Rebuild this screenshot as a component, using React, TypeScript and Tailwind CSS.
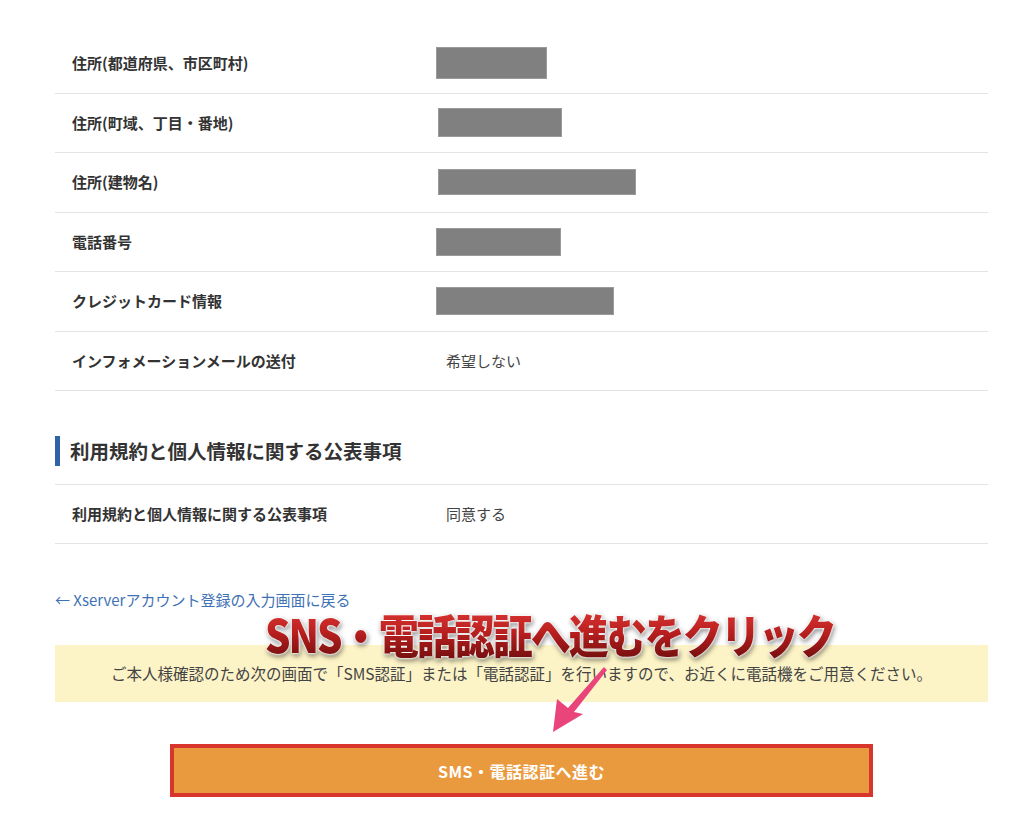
import React from 'react'

const font = '"Noto Sans CJK JP", "Noto Sans", sans-serif'

type Row = { label: string; value?: string; mask?: { w: number; h: number; x: number } }

const rows: Row[] = [
    { label: '住所(都道府県、市区町村)', mask: { w: 111, h: 32, x: 0 } },
    { label: '住所(町域、丁目・番地)', mask: { w: 124, h: 29, x: 2 } },
    { label: '住所(建物名)', mask: { w: 198, h: 26, x: 2 } },
    { label: '電話番号', mask: { w: 125, h: 28, x: 0 } },
    { label: 'クレジットカード情報', mask: { w: 178, h: 28, x: 0 } },
    { label: 'インフォメーションメールの送付', value: '希望しない' },
]

const Mask = ({ w, h, x }: { w: number; h: number; x: number }) => (
    <div className="bg-[#808080] border border-[#9a9a9a]" style={{ width: w, height: h, marginLeft: x }} />
)

export default function App() {
    return (
        <div className="w-[1024px] min-h-[837px] bg-white pl-[55px] pt-[34px]" style={{ fontFamily: font }}>
            <div className="w-[933px]">
                {/* 登録内容 */}
                {rows.map((r) => (
                    <div key={r.label} className="flex items-center h-[59.5px] border-b border-[#e3e3e3]">
                        <div className="w-[381px] pl-[17px] text-[15px] font-bold text-[#333]">{r.label}</div>
                        {r.mask ? (
                            <Mask {...r.mask} />
                        ) : (
                            <div className="pl-[10px] text-[15px] text-[#444]">{r.value}</div>
                        )}
                    </div>
                ))}

                {/* 公表事項 */}
                <div className="mt-[45px] flex items-center h-[30px]">
                    <div className="w-[5px] h-[30px] bg-[#2f63a8]" />
                    <h2 className="ml-[10px] text-[19.5px] font-bold text-[#333]">利用規約と個人情報に関する公表事項</h2>
                </div>
                <div className="mt-[18px] border-t border-b border-[#e3e3e3] flex items-center h-[60px]">
                    <div className="w-[381px] pl-[17px] text-[15px] font-bold text-[#333]">利用規約と個人情報に関する公表事項</div>
                    <div className="pl-[10px] text-[15px] text-[#444]">同意する</div>
                </div>

                <div className="relative">
                    <a className="block mt-[46px] text-[15px] leading-[20px] text-[#3f72b5]">← Xserverアカウント登録の入力画面に戻る</a>

                    <div className="mt-[35px] h-[57px] bg-[#fcf3c6] flex items-center justify-center text-[15.5px] text-[#444]">
                        ご本人様確認のため次の画面で「SMS認証」または「電話認証」を行いますので、お近くに電話機をご用意ください。
                    </div>

                    <div className="mt-[42px] flex justify-center">
                        <button className="w-[703px] h-[53px] border-[4px] border-[#d8362c] bg-[#ea9a3e] text-white text-[16px] font-bold tracking-[0.5px]">
                            SMS・電話認証へ進む
                        </button>
                    </div>

                    {/* 注釈 */}
                    <div
                        className="absolute left-[210px] top-[18px] text-[40px] leading-[50px] font-black tracking-[-2px] scale-y-[1.15] whitespace-nowrap text-transparent bg-clip-text bg-gradient-to-b from-[#e23a36] via-[#b81f1f] to-[#6e0d0d] [filter:drop-shadow(0_0_1px_#fff)_drop-shadow(0_0_1px_#fff)_drop-shadow(1px_2px_2px_rgba(0,0,0,0.45))]"
                    >
                        SNS・電話認証へ進むをクリック
                    </div>
                    <svg className="absolute left-[490px] top-[73px]" width="70" height="75" viewBox="0 0 70 75">
                        <path d="M59 4 L62 7 L29 49 L38 51 L8 69 L12 36 L23 45 Z" fill="#e9457b" />
                    </svg>
                </div>
            </div>
        </div>
    )
}
